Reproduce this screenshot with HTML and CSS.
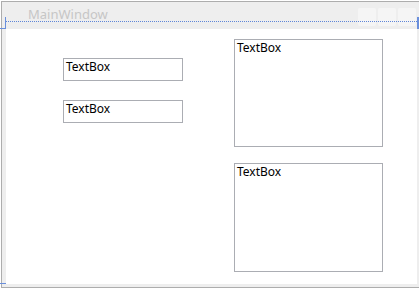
FILE: index.html
```html
<!DOCTYPE html>
<html lang="en">
<head>
  <meta charset="UTF-8">
  <title>MainWindow</title>
  <link rel="stylesheet" href="styles.css">
</head>
<body>
  <div class="window">
    <div class="titlebar">
      <span class="title">MainWindow</span>
      <div class="caption-buttons">
        <span class="cap-btn"></span>
        <span class="cap-btn"></span>
        <span class="cap-btn"></span>
      </div>
    </div>
    <div class="client">
      <div class="col col-left">
        <div class="textbox single">TextBox</div>
        <div class="textbox single">TextBox</div>
      </div>
      <div class="col col-right">
        <div class="textbox multi first">TextBox</div>
        <div class="textbox multi">TextBox</div>
      </div>
    </div>
  </div>

  <!-- designer adorners -->
  <div class="guide guide-dots"></div>
  <div class="guide guide-left"></div>
  <div class="guide guide-left-h"></div>
  <div class="guide guide-right"></div>
  <div class="guide guide-bottom-h"></div>
</body>
</html>
```

FILE: styles.css
```css
body {
  margin: 0;
  background: #ffffff;
  font-family: "Segoe UI", "Noto Sans", "DejaVu Sans", sans-serif;
  font-size: 12px;
  overflow: hidden;
}
.window {
  box-sizing: border-box;
  width: 419px;
  height: 287px;
  margin: 1px 0 0 1px;
  border: 1px solid #adadad;
  background: #eeeeee;
  padding: 0 2px 3px 4px;
  display: flex;
  flex-direction: column;
}
.titlebar {
  height: 27px;
  display: flex;
  align-items: flex-start;
  justify-content: space-between;
}
.title {
  margin: 4px 0 0 22px;
  font-size: 13px;
  line-height: 17px;
  color: #c6c6c6;
}
.caption-buttons {
  display: flex;
  gap: 2px;
  margin: 6px 1px 0 0;
}
.cap-btn {
  width: 18px;
  height: 18px;
  background: #f5f5f5;
  border-radius: 2px;
}
.client {
  height: 255px;
  background: #ffffff;
  display: flex;
}
.col {
  display: flex;
  flex-direction: column;
}
.col-left {
  padding: 29px 0 0 57px;
  gap: 19px;
}
.col-right {
  padding: 10px 0 0 51px;
  gap: 16px;
}
.textbox {
  box-sizing: border-box;
  border: 1px solid #abadb3;
  padding: 0 0 0 2px;
  line-height: 15px;
  color: #000;
}
.single {
  width: 120px;
  height: 23px;
}
.multi {
  width: 149px;
  height: 109px;
}
.multi.first {
  height: 108px;
}
.guide {
  position: absolute;
}
.guide-dots {
  left: 6px;
  top: 21px;
  width: 411px;
  border-top: 1px dotted #5f86d8;
}
.guide-left {
  left: 5px;
  top: 17px;
  width: 1px;
  height: 12px;
  background: #6a8fdc;
}
.guide-left-h {
  left: 0;
  top: 28px;
  width: 6px;
  height: 1px;
  background: #6a8fdc;
}
.guide-right {
  left: 417px;
  top: 17px;
  width: 2px;
  height: 12px;
  background: #6a8fdc;
}
.guide-bottom-h {
  left: 0;
  top: 283px;
  width: 6px;
  height: 1px;
  background: #6a8fdc;
}
```
